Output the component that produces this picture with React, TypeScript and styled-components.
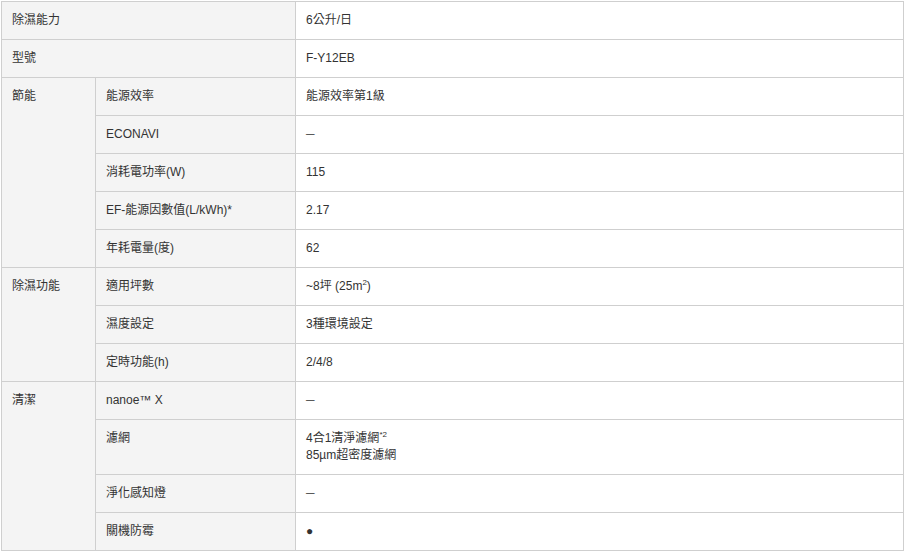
import React from "react";
import styled, { createGlobalStyle } from "styled-components";

const Global = createGlobalStyle`
  html, body { margin: 0; padding: 0; background: #fff; }
  body { font-family: "Liberation Sans", Arial, "Noto Sans CJK TC", sans-serif; }
`;

const Wrap = styled.div`
  padding: 1px 0 0 1px;
`;

const Table = styled.table`
  width: 903px;
  table-layout: fixed;
  border-collapse: collapse;
  border: 1px solid #cfcfcf;
  font-size: 12px;
  line-height: 17px;
  color: #333;
`;

const Cell = styled.td<{ $head?: boolean }>`
  border: 1px solid #cfcfcf;
  padding: 10px 10px 10px 10px;
  vertical-align: top;
  text-align: left;
  background: ${(p) => (p.$head ? "#f4f4f4" : "#fff")};
`;

const Sup = styled.sup`
  font-size: 8px;
  line-height: 0;
  vertical-align: 5px;
`;

type Item = { label: React.ReactNode; value: React.ReactNode };
type Group = { title: string; items: Item[] };

const groups: Group[] = [
  {
    title: "節能",
    items: [
      { label: "能源效率", value: "能源效率第1級" },
      { label: "ECONAVI", value: "—" },
      { label: "消耗電功率(W)", value: "115" },
      { label: "EF-能源因數值(L/kWh)*", value: "2.17" },
      { label: "年耗電量(度)", value: "62" },
    ],
  },
  {
    title: "除濕功能",
    items: [
      { label: "適用坪數", value: <>~8坪 (25m<Sup>2</Sup>)</> },
      { label: "濕度設定", value: "3種環境設定" },
      { label: "定時功能(h)", value: "2/4/8" },
    ],
  },
  {
    title: "清潔",
    items: [
      { label: "nanoe™ X", value: "—" },
      {
        label: "濾網",
        value: (
          <>
            4合1清淨濾網<Sup>*2</Sup>
            <br />
            85µm超密度濾網
          </>
        ),
      },
      { label: "淨化感知燈", value: "—" },
      { label: "關機防霉", value: "●" },
    ],
  },
];

const Dash = styled.span`
  font-size: 12px;
`;

export default function App() {
  return (
    <Wrap>
      <Global />
      <Table>
        <colgroup>
          <col style={{ width: 94 }} />
          <col style={{ width: 200 }} />
          <col />
        </colgroup>
        <tbody>
          <tr>
            <Cell $head colSpan={2}>除濕能力</Cell>
            <Cell>6公升/日</Cell>
          </tr>
          <tr>
            <Cell $head colSpan={2}>型號</Cell>
            <Cell>F-Y12EB</Cell>
          </tr>
          {groups.map((g) =>
            g.items.map((it, i) => (
              <tr key={g.title + i}>
                {i === 0 && (
                  <Cell $head rowSpan={g.items.length}>
                    {g.title}
                  </Cell>
                )}
                <Cell $head>{it.label}</Cell>
                <Cell>
                  <Dash>{it.value === "—" ? "─" : it.value}</Dash>
                </Cell>
              </tr>
            ))
          )}
        </tbody>
      </Table>
    </Wrap>
  );
}
